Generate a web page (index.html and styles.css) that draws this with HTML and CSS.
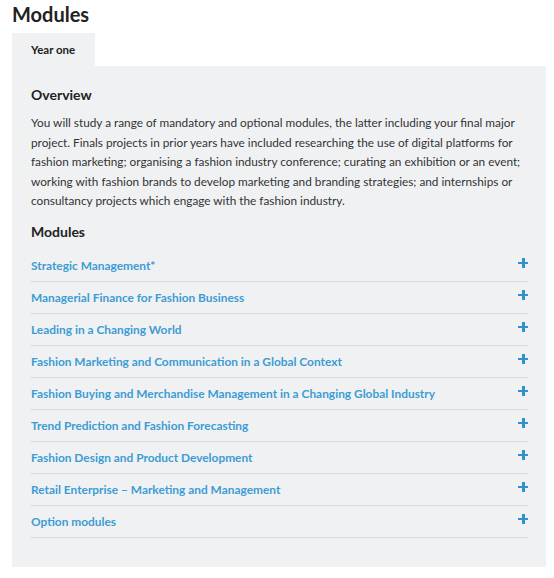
FILE: index.html
```html
<!DOCTYPE html>
<html lang="en">
<head>
<meta charset="utf-8">
<title>Modules</title>
<link rel="stylesheet" href="styles.css">
</head>
<body>
<h1 class="title">Modules</h1>
<div class="tabs"><div class="tab">Year one</div></div>
<div class="panel">
  <h2 class="heading">Overview</h2>
  <p class="intro">You will study a range of mandatory and optional modules, the latter including your final major project. Finals projects in prior years have included researching the use of digital platforms for fashion marketing; organising a fashion industry conference; curating an exhibition or an event; working with fashion brands to develop marketing and branding strategies; and internships or consultancy projects which engage with the fashion industry.</p>
  <h3 class="heading sub">Modules</h3>
  <ul class="modules">
    <li class="module"><span class="name">Strategic Management*</span><span class="plus"></span></li>
    <li class="module"><span class="name">Managerial Finance for Fashion Business</span><span class="plus"></span></li>
    <li class="module"><span class="name">Leading in a Changing World</span><span class="plus"></span></li>
    <li class="module"><span class="name">Fashion Marketing and Communication in a Global Context</span><span class="plus"></span></li>
    <li class="module"><span class="name">Fashion Buying and Merchandise Management in a Changing Global Industry</span><span class="plus"></span></li>
    <li class="module"><span class="name">Trend Prediction and Fashion Forecasting</span><span class="plus"></span></li>
    <li class="module"><span class="name">Fashion Design and Product Development</span><span class="plus"></span></li>
    <li class="module"><span class="name">Retail Enterprise – Marketing and Management</span><span class="plus"></span></li>
    <li class="module"><span class="name">Option modules</span><span class="plus"></span></li>
  </ul>
</div>
</body>
</html>
```
FILE: styles.css
```css
html, body {
  margin: 0;
  padding: 0;
  background: #fff;
}
body {
  padding: 0 8px 0 12px;
  font-family: Lato, "Liberation Sans", sans-serif;
  color: #333;
}
.title {
  margin: 0 0 5px;
  font-size: 20px;
  line-height: 28px;
  font-weight: 700;
  color: #222;
}
.tabs {
  display: flex;
}
.tab {
  width: 64px;
  height: 33px;
  padding-left: 19px;
  background: #f0f1f3;
  font-size: 11.5px;
  font-weight: 700;
  line-height: 33px;
  color: #222;
}
.panel {
  background: #f0f1f3;
  padding: 20px 18px 29px 19px;
}
.heading {
  margin: 0;
  font-size: 14px;
  line-height: 18px;
  font-weight: 700;
  color: #222;
}
.intro {
  margin: 9px 0 12px;
  font-size: 11.8px;
  line-height: 19.5px;
}
.sub {
  margin-bottom: 9px;
}
.modules {
  list-style: none;
  margin: 0;
  padding: 0;
}
.module {
  display: flex;
  align-items: center;
  justify-content: space-between;
  height: 31px;
  border-bottom: 1px solid #d9d9d9;
}
.name {
  font-size: 11.9px;
  font-weight: 700;
  color: #3d9cd4;
}
.plus {
  position: relative;
  width: 10px;
  height: 10px;
  margin-top: -5px;
}
.plus::before, .plus::after {
  content: "";
  position: absolute;
  background: #2f93cf;
}
.plus::before {
  left: 0;
  top: 4px;
  width: 10px;
  height: 2.5px;
}
.plus::after {
  left: 4px;
  top: 0;
  width: 2.5px;
  height: 10px;
}
```
